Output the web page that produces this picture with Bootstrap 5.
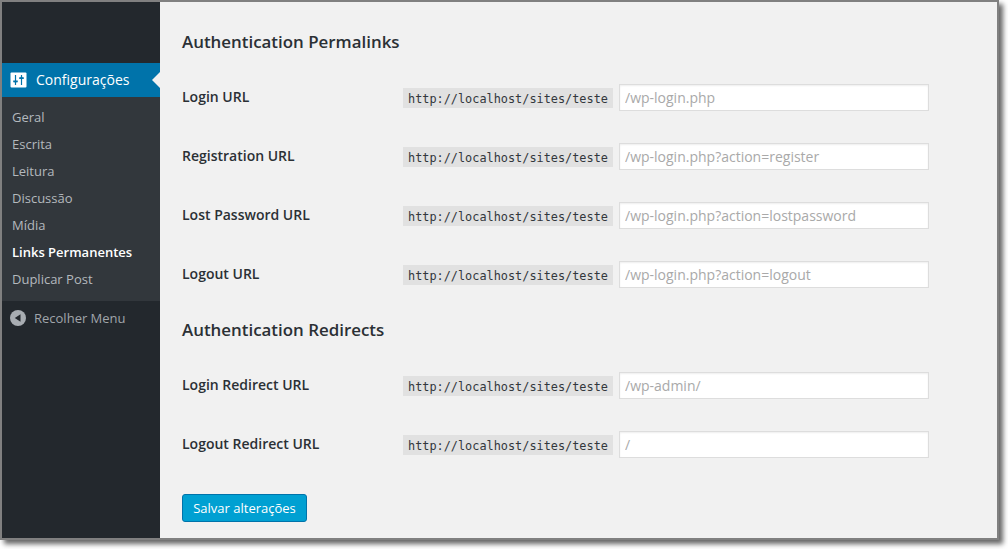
<!DOCTYPE html>
<html lang="pt-BR">
<head>
<meta charset="utf-8">
<meta name="viewport" content="width=device-width, initial-scale=1">
<title>Links Permanentes</title>
<link href="https://cdn.jsdelivr.net/npm/bootstrap@5.3.0/dist/css/bootstrap.min.css" rel="stylesheet">
<style>
body{background:#fff;font-family:"Open Sans","Noto Sans",sans-serif;font-size:13px;color:#2b3035;min-height:549px;overflow:hidden}
.screen{width:999px;height:540px;border:2px solid #808080;background:#f1f1f1;box-shadow:4px 4px 5px rgba(0,0,0,.6)}
.sidebar{width:158px;background:#23282d;padding-top:61px}
.menu-head{height:34px;background:#0073aa;color:#fff;font-size:14px;padding-left:8px;gap:9px}
.menu-head .menu-title{margin-bottom:2px}
.menu-arrow{right:0;top:9px;border:8px solid transparent;border-left:0;border-right-color:#f1f1f1}
.submenu{background:#32373c;padding:7px 0 8px;height:204px}
.submenu .nav-link{height:27px;line-height:27px;padding:0 0 0 10px;color:#b4b9be;font-size:13px}
.submenu .nav-link.active{color:#fff;font-weight:600}
.collapse-menu{height:34px;color:#a0a5aa;padding-left:8px;gap:8px}
.collapse-menu span{margin-top:2px}
.content{padding:27px 0 0 22px}
.section-title{font-size:16.9px;font-weight:600;line-height:26px;margin:0}
.field-group{padding-top:29px}
.section-title.redirects{margin-top:-3px}
.field{height:59px}
.field-label{width:221px;font-size:14px;font-weight:600;line-height:26px}
.prefix{width:210px;height:20px;line-height:23px;margin:4px 6px 0 0;padding:0 5px;background:#e1e1e1;color:#32373c;font-family:"DejaVu Sans Mono",monospace;font-size:11.87px;white-space:nowrap}
.field .form-control{width:310px;height:27px;min-height:0;border:1px solid #ddd;border-radius:0;padding:0 5px;font-size:14px;line-height:25px;box-shadow:inset 0 1px 2px rgba(0,0,0,.07)}
.form-control::placeholder{color:#a9a9a9}
.save{width:125px;height:28px;margin-top:4px;padding:0;background:#00a0d2;border:1px solid #0073aa;border-radius:3px;color:#fff;font-size:13px;line-height:26px}
</style>
</head>
<body>
<div class="screen d-flex">
  <aside class="sidebar flex-shrink-0">
    <div class="menu-head d-flex align-items-center position-relative">
      <svg width="17" height="16" viewBox="0 0 17 16"><rect x=".5" y=".5" width="16" height="15" rx="1" fill="#fff"/><path d="M5.5 3v10M11.5 3v10" stroke="#0073aa" stroke-width="1.2"/><path d="M3.2 8.6h4.6v1.7H6.5l-1 1.2-1-1.2H3.2zM9.2 7h4.6V5.3h-1.3l-1-1.2-1 1.2H9.2z" fill="#0073aa"/></svg>
      <span class="menu-title">Configurações</span>
      <span class="menu-arrow position-absolute"></span>
    </div>
    <nav class="submenu nav flex-column flex-nowrap">
      <a class="nav-link" href="#">Geral</a>
      <a class="nav-link" href="#">Escrita</a>
      <a class="nav-link" href="#">Leitura</a>
      <a class="nav-link" href="#">Discussão</a>
      <a class="nav-link" href="#">Mídia</a>
      <a class="nav-link active" href="#">Links Permanentes</a>
      <a class="nav-link" href="#">Duplicar Post</a>
    </nav>
    <div class="collapse-menu d-flex align-items-center">
      <svg width="16" height="16" viewBox="0 0 16 16"><circle cx="8" cy="8" r="8" fill="#a8adb2"/><path d="M10.5 4.2v7.6L4.8 8z" fill="#23282d"/></svg>
      <span>Recolher Menu</span>
    </div>
  </aside>
  <main class="content flex-grow-1">
    <h3 class="section-title">Authentication Permalinks</h3>
    <form>
      <div class="field-group">
        <div class="field d-flex align-items-start"><label class="field-label" for="f1">Login URL</label><code class="prefix">http://localhost/sites/teste</code><input id="f1" class="form-control" placeholder="/wp-login.php"></div>
        <div class="field d-flex align-items-start"><label class="field-label" for="f2">Registration URL</label><code class="prefix">http://localhost/sites/teste</code><input id="f2" class="form-control" placeholder="/wp-login.php?action=register"></div>
        <div class="field d-flex align-items-start"><label class="field-label" for="f3">Lost Password URL</label><code class="prefix">http://localhost/sites/teste</code><input id="f3" class="form-control" placeholder="/wp-login.php?action=lostpassword"></div>
        <div class="field d-flex align-items-start"><label class="field-label" for="f4">Logout URL</label><code class="prefix">http://localhost/sites/teste</code><input id="f4" class="form-control" placeholder="/wp-login.php?action=logout"></div>
      </div>
      <h3 class="section-title redirects">Authentication Redirects</h3>
      <div class="field-group">
        <div class="field d-flex align-items-start"><label class="field-label" for="f5">Login Redirect URL</label><code class="prefix">http://localhost/sites/teste</code><input id="f5" class="form-control" placeholder="/wp-admin/"></div>
        <div class="field d-flex align-items-start"><label class="field-label" for="f6">Logout Redirect URL</label><code class="prefix">http://localhost/sites/teste</code><input id="f6" class="form-control" placeholder="/"></div>
      </div>
      <button type="button" class="btn save">Salvar alterações</button>
    </form>
  </main>
</div>
<script src="https://cdn.jsdelivr.net/npm/bootstrap@5.3.0/dist/js/bootstrap.bundle.min.js"></script>
</body>
</html>
